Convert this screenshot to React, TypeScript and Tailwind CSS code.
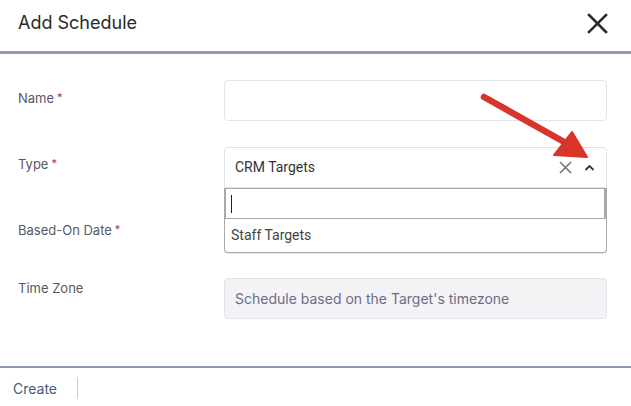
import React from 'react'

const label = 'text-[13px] text-[#555a63] font-["Inter",sans-serif]'

function Req() {
  return <span className="ml-[3px] text-[11px] text-[#b03a3a] align-top">*</span>
}

export default function App() {
  return (
    <div className="w-[631px] h-[406px] bg-white relative overflow-hidden font-['Inter',sans-serif]">
      {/* header */}
      <div className="h-[54px] flex items-start justify-between border-b-[3px] border-[#8c9bb1] pl-[18px] pr-[23px]">
        <h1 className="mt-[11px] text-[18px] text-[#2a2a2a] leading-[24px]">Add Schedule</h1>
        <svg className="mt-[13px]" width="21" height="21" viewBox="0 0 21 21">
          <path d="M2 2L19 19M19 2L2 19" stroke="#2b2b2b" strokeWidth="2.6" strokeLinecap="square" />
        </svg>
      </div>

      {/* body */}
      <div className="h-[314px] border-b-[2px] border-[#8c9bb1] pt-[26px] pl-[18px] pr-[24px]">
        <div className="flex items-start">
          <div className={`w-[206px] pt-[9px] ${label}`}>Name<Req /></div>
          <div className="flex-1 h-[41px] border border-[#e1e5ee] rounded-[4px]" />
        </div>

        <div className="flex items-start mt-[26px]">
          <div className={`w-[206px] pt-[8px] ${label}`}>Type<Req /></div>
          <div className="flex-1 relative z-10">
            <div className="h-[41px] border border-[#dde2ec] rounded-t-[4px] flex items-center pl-[10px] pr-[10px] font-['Roboto',sans-serif] text-[14px] text-[#333]">
              <span className="flex-1">CRM Targets</span>
              <svg width="13" height="13" viewBox="0 0 13 13" className="mr-[12px]">
                <path d="M1 1L12 12M12 1L1 12" stroke="#777" strokeWidth="1.7" />
              </svg>
              <svg width="11" height="8" viewBox="0 0 11 8" className="mr-[1px]">
                <path d="M1.5 6L5.5 2L9.5 6" stroke="#333" strokeWidth="1.8" fill="none" />
              </svg>
            </div>
            <div className="absolute left-0 right-0 top-[41px] bg-white border border-t-0 border-[#a9a9a9] rounded-b-[4px]">
              <div className="h-[31px] border border-[#a8a8a8] border-r-2 flex items-center pl-[5px]">
                <div className="w-px h-[18px] bg-[#222]" />
              </div>
              <div className="h-[33px] flex items-center pl-[6px] font-['Roboto',sans-serif] text-[14px] text-[#444]">Staff Targets</div>
            </div>
          </div>
        </div>

        <div className="flex items-start mt-[25px]">
          <div className={`w-[206px] pt-[8px] ${label}`}>Based-On Date<Req /></div>
          <div className="flex-1 h-[41px] border border-[#e1e5ee] rounded-[4px]" />
        </div>

        <div className="flex items-start mt-[24px]">
          <div className={`w-[206px] pt-[1px] ${label}`}>Time Zone</div>
          <div className="flex-1 h-[41px] border border-[#e3e3ea] bg-[#f3f3f5] rounded-[4px] flex items-center pl-[10px] text-[14px] text-[#6e6c86]">
            Schedule based on the Target's timezone
          </div>
        </div>
      </div>

      {/* footer */}
      <div className="flex items-center h-[38px] pt-[2px]">
        <button className="pl-[13px] pr-[20px] text-[14px] text-[#4b5a76]">Create</button>
        <div className="w-px h-[22px] bg-[#c9cdd6]" />
      </div>

      {/* annotation arrow */}
      <svg className="absolute left-0 top-0 pointer-events-none z-20" width="631" height="406">
        <line x1="484" y1="97" x2="566" y2="143" stroke="#d8352a" strokeWidth="6.5" strokeLinecap="round" />
        <polygon points="587,157 572,132 554,155" fill="#d8352a" stroke="#d8352a" strokeWidth="2" strokeLinejoin="round" />
      </svg>
    </div>
  )
}
